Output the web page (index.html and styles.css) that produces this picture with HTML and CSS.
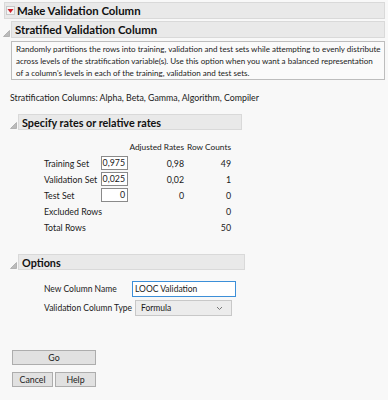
FILE: index.html
```html
<!DOCTYPE html>
<html lang="en">
<head>
    <meta charset="UTF-8">
    <title>Make Validation Column</title>
    <link rel="stylesheet" href="styles.css">
</head>
<body>
    <div class="outline">
        <div class="titleBar topBar">
            <span class="redTri"><svg width="9" height="9" viewBox="0 0 9 9"><rect x="0.5" y="0.5" width="8" height="8" fill="#f4f4f4" stroke="#c8c8c8"/><path d="M1.5 3 L7.5 3 L4.5 7 Z" fill="#d0202a"/></svg></span>
            Make Validation Column
        </div>
        <div class="section">
            <div class="sectionHead">
                <span class="disclose"><svg width="7" height="7" viewBox="0 0 7 7"><path d="M6.5 0.5 L6.5 6.5 L0.5 6.5 Z" fill="#bbb" stroke="#999" stroke-width="0.6"/></svg></span>
                <div class="titleBar">Stratified Validation Column</div>
            </div>
            <div class="body">
                <div class="note">Randomly partitions the rows into training, validation and test sets while attempting to evenly distribute<br>across levels of the stratification variable(s). Use this option when you want a balanced representation<br>of a column's levels in each of the training, validation and test sets.</div>
                <div class="strat">Stratification Columns: Alpha, Beta, Gamma, Algorithm, Compiler</div>

                <div class="sub">
                    <div class="sectionHead">
                        <span class="disclose"><svg width="7" height="7" viewBox="0 0 7 7"><path d="M6.5 0.5 L6.5 6.5 L0.5 6.5 Z" fill="#bbb" stroke="#999" stroke-width="0.6"/></svg></span>
                        <div class="titleBar subBar">Specify rates or relative rates</div>
                    </div>
                    <div class="rates">
                        <span></span><span></span><span class="colHead">Adjusted Rates</span><span class="colHead">Row Counts</span>
                        <span class="lbl">Training Set</span><span class="box">0,975</span><span class="num">0,98</span><span class="num">49</span>
                        <span class="lbl">Validation Set</span><span class="box">0,025</span><span class="num">0,02</span><span class="num">1</span>
                        <span class="lbl">Test Set</span><span class="box">0</span><span class="num">0</span><span class="num">0</span>
                        <span class="lbl">Excluded Rows</span><span></span><span></span><span class="num">0</span>
                        <span class="lbl">Total Rows</span><span></span><span></span><span class="num">50</span>
                    </div>
                </div>

                <div class="sub options">
                    <div class="sectionHead">
                        <span class="disclose"><svg width="7" height="7" viewBox="0 0 7 7"><path d="M6.5 0.5 L6.5 6.5 L0.5 6.5 Z" fill="#bbb" stroke="#999" stroke-width="0.6"/></svg></span>
                        <div class="titleBar subBar">Options</div>
                    </div>
                    <div class="optGrid">
                        <span class="lbl">New Column Name</span>
                        <span class="textInput">LOOC Validation</span>
                        <span class="lbl">Validation Column Type</span>
                        <span class="combo">Formula <svg width="7" height="5" viewBox="0 0 7 5"><path d="M1 1 L3.5 3.5 L6 1" fill="none" stroke="#777" stroke-width="1"/></svg></span>
                    </div>
                </div>
            </div>
        </div>
    </div>

    <div class="buttons">
        <button class="btn">Go</button>
        <div class="btnRow">
            <button class="btn">Cancel</button>
            <button class="btn">Help</button>
        </div>
    </div>
</body>
</html>
```

FILE: styles.css
```css
* {
    margin: 0;
    padding: 0;
    box-sizing: border-box;
}

body {
    font-family: 'Lato', sans-serif;
    font-size: 8.8px;
    color: #1a1a1a;
    background: #f8f8f8;
    width: 388px;
    height: 400px;
    overflow: hidden;
}

.outline {
    padding: 2px 3px 0 4px;
}

.titleBar {
    height: 17px;
    background: #e9e9e9;
    border: 1px solid #d9d9d9;
    display: flex;
    align-items: center;
    font-weight: 700;
    font-size: 11.4px;
    color: #111;
    padding-left: 3px;
    flex: 1;
    white-space: nowrap;
}

.topBar {
    padding-left: 1px;
    gap: 2px;
}

.redTri {
    display: flex;
}

.section {
    margin-top: 2px;
}

.sectionHead {
    display: flex;
    align-items: center;
    margin-left: -2px;
}

.disclose {
    width: 9px;
    display: flex;
    align-items: flex-end;
    height: 14px;
    padding-left: 1px;
}

.body {
    padding-left: 7px;
}

.note {
    margin-top: 3px;
    border: 1px solid #bdbdbd;
    background: #fafafa;
    padding: 1px 0 0 4px;
    font-size: 8.05px;
    line-height: 12px;
    white-space: nowrap;
    overflow: hidden;
}

.strat {
    margin-top: 12px;
    margin-left: -1px;
    line-height: 12px;
}

.sub {
    margin-top: 10px;
    width: 231px;
}

.subBar {
    height: 16px;
    font-size: 10.8px;
}

.rates {
    display: grid;
    grid-template-columns: 57px 27px 56px 47px;
    grid-auto-rows: 16px;
    align-items: center;
    margin: 9px 0 0 33px;
}

.colHead {
    text-align: right;
    white-space: nowrap;
    font-size: 8.3px;
}

.lbl {
    white-space: nowrap;
}

.num {
    text-align: right;
}

.box {
    border: 1px solid #8a8a8a;
    background: #fff;
    height: 14px;
    line-height: 12px;
    text-align: right;
    padding-right: 2px;
}

.options {
    margin-top: 19px;
    width: 234px;
}

.optGrid {
    display: grid;
    grid-template-columns: 88px 104px;
    grid-auto-rows: 16px;
    row-gap: 3px;
    align-items: center;
    margin: 11px 0 0 33px;
    font-size: 8.5px;
}

.textInput {
    border: 1px solid #3c8fd8;
    background: #fff;
    height: 16px;
    line-height: 14px;
    padding-left: 2px;
}

.combo {
    display: flex;
    justify-content: space-between;
    align-items: center;
    margin-left: 3px;
    width: 97px;
    height: 16px;
    border: 1px solid #c8c8c8;
    background: #ececec;
    padding: 0 8px 0 5px;
}

.buttons {
    margin: 34px 0 0 12px;
    width: 84px;
    display: flex;
    flex-direction: column;
    gap: 7px;
}

.btnRow {
    display: flex;
    gap: 2px;
}

.btn {
    font-family: inherit;
    font-size: 8.8px;
    color: #222;
    height: 15px;
    line-height: 13px;
    background: #e1e1e1;
    border: 1px solid #adadad;
}

.btnRow .btn:first-child {
    width: 41px;
}

.btnRow .btn:last-child {
    flex: 1;
}
```
